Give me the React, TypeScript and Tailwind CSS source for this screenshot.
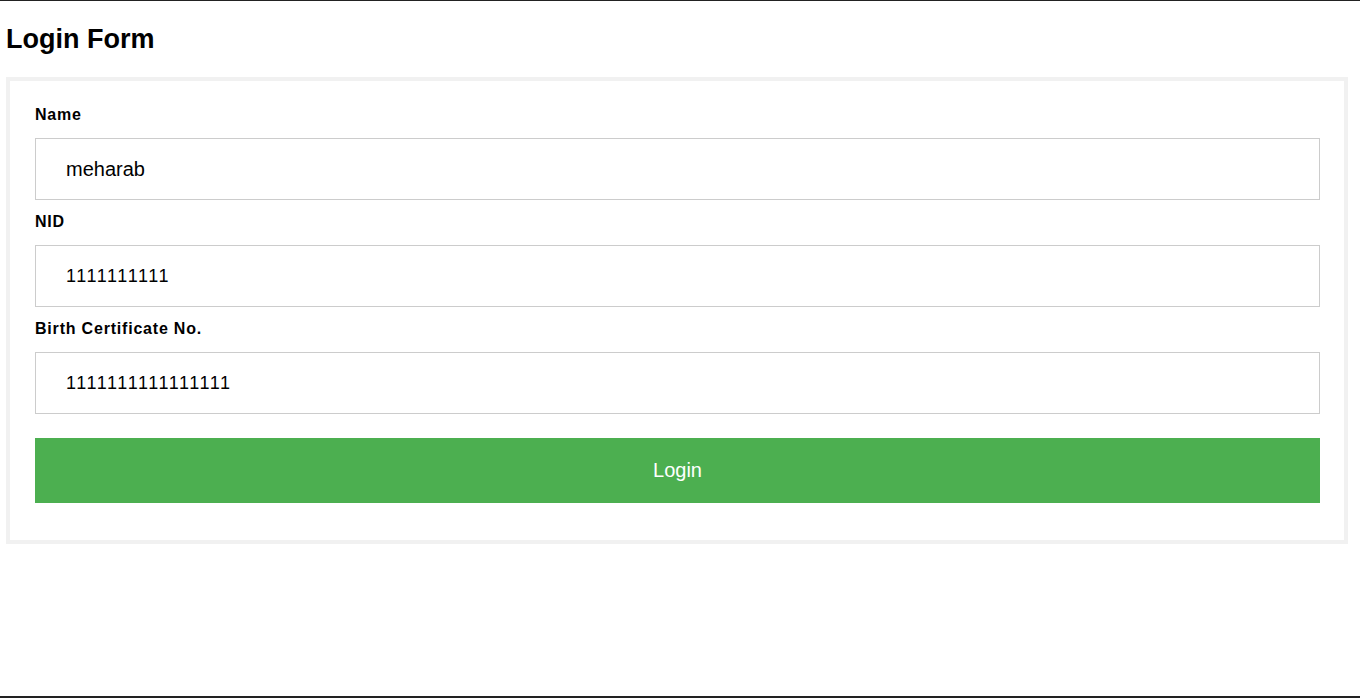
import { useState } from "react";

const fields = [
  { key: "name", label: "Name", value: "meharab", size: "text-[20px]" },
  { key: "nid", label: "NID", value: "1111111111", size: "text-[18px] tracking-[1.6px]" },
  { key: "birth", label: "Birth Certificate No.", value: "1111111111111111", size: "text-[18px] tracking-[1.6px]" },
];

export default function App() {
  const [values, setValues] = useState<Record<string, string>>(
    Object.fromEntries(fields.map((f) => [f.key, f.value]))
  );

  return (
    <div className="h-[698px] border-t border-b-2 border-[#222] bg-white px-[6px] font-['Liberation_Sans',Arial,sans-serif] text-black">
      <h2 className="mt-[23px] text-[27px] font-bold leading-[31px]">Login Form</h2>

      <form
        onSubmit={(e) => e.preventDefault()}
        className="mt-[22px] w-[1342px] border-4 border-[#f1f1f1] pl-[25px] pr-[24px] pt-[25px] pb-[37px]"
      >
        {fields.map((f, i) => (
          <div key={f.key} className={i > 0 ? "mt-[13px]" : ""}>
            <label htmlFor={f.key} className="block h-[18px] text-[16px] font-bold leading-[18px] tracking-[0.8px]">
              {f.label}
            </label>
            <input
              id={f.key}
              value={values[f.key]}
              onChange={(e) => setValues({ ...values, [f.key]: e.target.value })}
              className={`mt-[14px] block h-[62px] w-full border border-[#ccc] pl-[30px] pr-4 outline-none ${f.size}`}
            />
          </div>
        ))}

        <button
          type="submit"
          className="mt-[24px] block h-[65px] w-full bg-[#4caf50] pb-[2px] text-[20px] text-white"
        >
          Login
        </button>
      </form>
    </div>
  );
}
